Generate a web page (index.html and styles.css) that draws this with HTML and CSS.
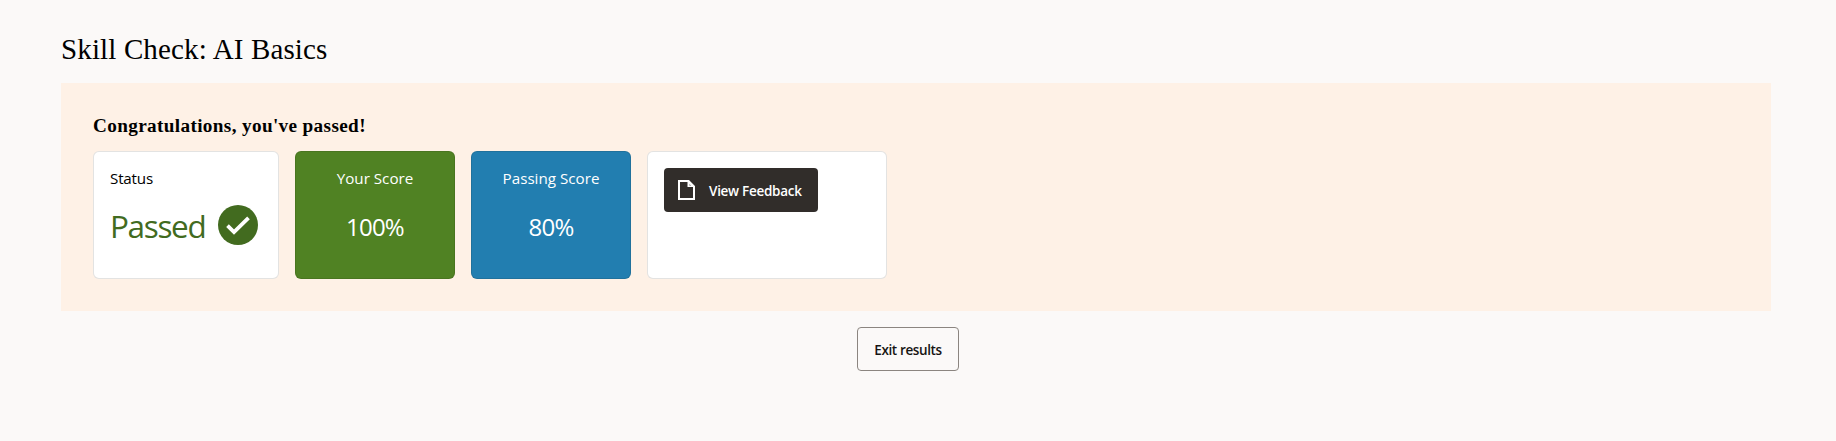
FILE: index.html
```html
<!DOCTYPE html>
<html lang="en">
<head>
<meta charset="utf-8">
<title>Skill Check: AI Basics</title>
<link rel="stylesheet" href="styles.css">
</head>
<body>
<main class="page">
  <h1 class="title">Skill Check: AI Basics</h1>
  <section class="panel">
    <h2 class="message">Congratulations, you've passed!</h2>
    <div class="cards">
      <div class="card status">
        <span class="label status-label">Status</span>
        <div class="result">
          <span class="result-text">Passed</span>
          <svg class="check" viewBox="0 0 40 40" aria-hidden="true"><circle cx="20" cy="20" r="20" fill="#426b1f"/><path d="M9.500 20.600 16 27 30.500 12.800" fill="none" stroke="#fff" stroke-width="3.800"/></svg>
        </div>
      </div>
      <div class="card score own">
        <span class="label own-label">Your Score</span>
        <span class="value">100%</span>
      </div>
      <div class="card score passing">
        <span class="label passing-label">Passing Score</span>
        <span class="value">80%</span>
      </div>
      <div class="card feedback">
        <button class="btn btn-dark">
          <svg class="doc" viewBox="0 0 17 20" aria-hidden="true"><path fill="#fff" fill-rule="evenodd" d="M0 0H11L17 6V20H0ZM2 2V18H15V7H9.500V2Z"/><path fill="#312d2a" d="M11.500 4.200 13 5.600H11.500Z"/></svg>
          <span class="feedback-text">View Feedback</span>
        </button>
      </div>
    </div>
  </section>
  <div class="actions"><button class="btn btn-outline"><span class="exit-text">Exit results</span></button></div>
</main>
</body>
</html>
```
FILE: styles.css
```css
* { box-sizing: border-box; }
body { margin: 0; background: #fbf9f8; color: #000; font-family: "Open Sans", "Noto Sans", sans-serif; }
.page { padding: 31px 65px 0 61px; }
.title { margin: 0; height: 52px; font: 400 29px/36px "Liberation Serif", serif; letter-spacing: 0.14px; white-space: nowrap; }
.panel { height: 228px; padding: 32px; background: #fef1e6; }
.message { margin: 0; height: 36px; font: 700 19.2px/22px "Liberation Serif", serif; letter-spacing: 0.36px; white-space: nowrap; }
.cards { display: flex; gap: 16px; }
.card { display: flex; flex-direction: column; height: 128px; padding: 14px 16px; border: 1px solid rgba(22, 21, 19, 0.12); border-radius: 6px; background: #fff; white-space: nowrap; }
.label { font-size: 15.2px; line-height: 24px; }
.status-label { letter-spacing: -0.2px; }
.status { width: 186px; }
.result { display: flex; align-items: center; justify-content: space-between; height: 40px; margin: 15px 4px 0 0; }
.result-text { padding-top: 2px; color: #426b1f; font-size: 31.5px; line-height: 40px; letter-spacing: -1.35px; }
.check { width: 40px; height: 40px; }
.score { width: 160px; align-items: center; color: #fff; }
.own { background: #508223; }
.passing { background: #227eb0; }
.value { margin-top: 21px; font-size: 24px; line-height: 32px; letter-spacing: -0.8px; }
.feedback { width: 240px; padding: 16px; align-items: flex-start; }
.btn { display: flex; align-items: center; height: 44px; padding: 0; border-radius: 4px; font: 600 13.5px/20px "Open Sans", "Noto Sans", sans-serif; white-space: nowrap; }
.btn-dark { width: 154px; padding-left: 14px; gap: 14px; border: 0; background: #312d2a; color: #fff; }
.feedback-text { padding-top: 2px; letter-spacing: -0.28px; }
.exit-text { padding-top: 2px; letter-spacing: -0.38px; }
.doc { width: 17px; height: 20px; }
.actions { display: flex; justify-content: center; padding: 16px 16px 0 0; }
.btn-outline { width: 102px; justify-content: center; border: 1px solid #8b8580; background: transparent; color: #161513; }
```
